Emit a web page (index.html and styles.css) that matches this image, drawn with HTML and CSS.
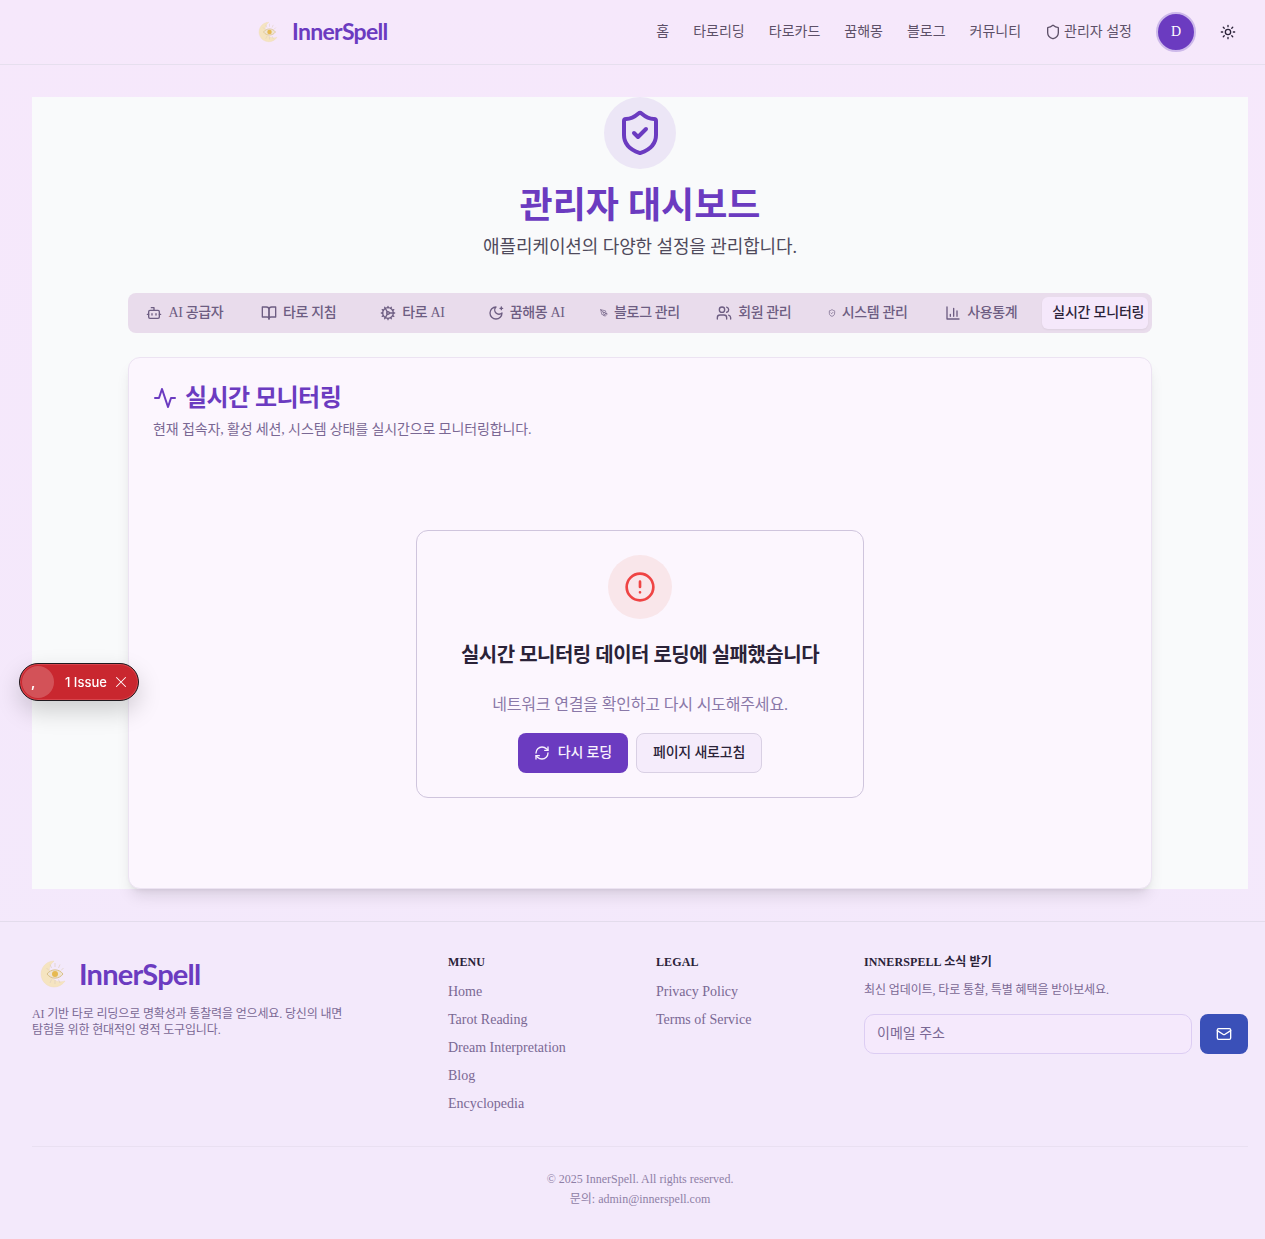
FILE: index.html
```html
<!DOCTYPE html>
<html lang="ko">
<head>
  <meta charset="UTF-8" />
  <meta name="viewport" content="width=device-width, initial-scale=1.0" />
  <link rel="stylesheet" href="styles.css">
  <title>InnerSpell 관리자 대시보드</title>
</head>
<body>
  <svg class="sprite" width="0" height="0" aria-hidden="true">
    <symbol id="i-shield" viewBox="0 0 24 24"><path d="M20 13c0 5-3.5 7.5-7.66 8.95a1 1 0 0 1-.67-.01C7.5 20.5 4 18 4 13V6a1 1 0 0 1 1-1c2 0 4.5-1.2 6.24-2.72a1.17 1.17 0 0 1 1.52 0C14.51 3.81 17 5 19 5a1 1 0 0 1 1 1z"/></symbol>
    <symbol id="i-shield-check" viewBox="0 0 24 24"><path d="M20 13c0 5-3.5 7.5-7.66 8.95a1 1 0 0 1-.67-.01C7.5 20.5 4 18 4 13V6a1 1 0 0 1 1-1c2 0 4.5-1.2 6.24-2.72a1.17 1.17 0 0 1 1.52 0C14.51 3.81 17 5 19 5a1 1 0 0 1 1 1z"/><path d="m9 12 2 2 4-4"/></symbol>
    <symbol id="i-sun" viewBox="0 0 24 24"><circle cx="12" cy="12" r="4"/><path d="M12 2v2M12 20v2M4.93 4.93l1.41 1.41M17.66 17.66l1.41 1.41M2 12h2M20 12h2M6.34 17.66l-1.41 1.41M19.07 4.93l-1.41 1.41"/></symbol>
    <symbol id="i-bot" viewBox="0 0 24 24"><path d="M12 8V4H8"/><rect x="4" y="8" width="16" height="12" rx="2"/><path d="M2 14h2M20 14h2M15 13v2M9 13v2"/></symbol>
    <symbol id="i-book" viewBox="0 0 24 24"><path d="M2 3h6a4 4 0 0 1 4 4v14a3 3 0 0 0-3-3H2z"/><path d="M22 3h-6a4 4 0 0 0-4 4v14a3 3 0 0 1 3-3h7z"/></symbol>
    <symbol id="i-cog" viewBox="0 0 24 24"><path d="M12 20a8 8 0 1 0 0-16 8 8 0 0 0 0 16Z"/><path d="M12 14a2 2 0 1 0 0-4 2 2 0 0 0 0 4Z"/><path d="M12 2v2M12 22v-2M17 20.66l-1-1.73M11 10.27 7 3.34M20.66 17l-1.73-1M3.34 7l1.73 1M14 12h8M2 12h2M20.66 7l-1.73 1M3.34 17l1.73-1M17 3.34l-1 1.73M11 13.73l-4 6.93"/></symbol>
    <symbol id="i-moon" viewBox="0 0 24 24"><path d="M12 3a6 6 0 0 0 9 9 9 9 0 1 1-9-9Z"/><path d="M20 3v4M22 5h-4"/></symbol>
    <symbol id="i-pen" viewBox="0 0 24 24"><path d="m12 19 7-7 3 3-7 7-3-3z"/><path d="m18 13-1.5-7.5L2 2l3.5 14.5L13 18l5-5z"/><path d="m2 2 7.59 7.59"/><circle cx="11" cy="11" r="2"/></symbol>
    <symbol id="i-users" viewBox="0 0 24 24"><path d="M16 21v-2a4 4 0 0 0-4-4H6a4 4 0 0 0-4 4v2"/><circle cx="9" cy="7" r="4"/><path d="M22 21v-2a4 4 0 0 0-3-3.87"/><path d="M16 3.13a4 4 0 0 1 0 7.75"/></symbol>
    <symbol id="i-chart" viewBox="0 0 24 24"><path d="M3 3v18h18"/><path d="M18 17V9M13 17V5M8 17v-3"/></symbol>
    <symbol id="i-activity" viewBox="0 0 24 24"><path d="M22 12h-4l-3 9L9 3l-3 9H2"/></symbol>
    <symbol id="i-alert" viewBox="0 0 24 24"><circle cx="12" cy="12" r="10"/><path d="M12 8v4M12 16h.01"/></symbol>
    <symbol id="i-refresh" viewBox="0 0 24 24"><path d="M3 12a9 9 0 0 1 9-9 9.75 9.75 0 0 1 6.74 2.74L21 8"/><path d="M21 3v5h-5"/><path d="M21 12a9 9 0 0 1-9 9 9.75 9.75 0 0 1-6.74-2.74L3 16"/><path d="M8 16H3v5"/></symbol>
    <symbol id="i-mail" viewBox="0 0 24 24"><rect x="2" y="4" width="20" height="16" rx="2"/><path d="m22 7-8.97 5.7a1.94 1.94 0 0 1-2.06 0L2 7"/></symbol>
    <symbol id="i-logo" viewBox="0 0 32 32">
      <path class="logo-moon" d="M17 3a13 13 0 1 0 11 20A11.500 11.500 0 0 1 17 3Z"/>
      <path class="logo-rays" d="M18 5v4M13 6.500l1.500 3.500M23 6.500 21.500 10M9.500 10l2.500 2.500M26.500 10 24 12.500M18 22v4M13 25l1.500-3.500M23 25l-1.500-3.500"/>
      <path class="logo-eye" d="M10 16c4-5.500 12-5.500 16 0-4 5.500-12 5.500-16 0Z"/>
      <circle class="logo-iris" cx="18" cy="16" r="3"/>
    </symbol>
  </svg>

  <header class="topbar">
    <a class="brand" href="#">
      <svg class="brand-mark"><use href="#i-logo"/></svg>
      <span class="brand-name">InnerSpell</span>
    </a>
    <nav class="topnav">
      <a href="#"><span class="label">홈</span></a>
      <a href="#"><span class="label">타로리딩</span></a>
      <a href="#"><span class="label">타로카드</span></a>
      <a href="#"><span class="label">꿈해몽</span></a>
      <a href="#"><span class="label">블로그</span></a>
      <a href="#"><span class="label">커뮤니티</span></a>
      <a class="topnav-admin" href="#"><svg class="icon icon-16"><use href="#i-shield"/></svg><span class="label">관리자 설정</span></a>
      <span class="avatar">D</span>
      <button class="theme-btn" type="button" aria-label="테마"><svg class="icon icon-16"><use href="#i-sun"/></svg></button>
    </nav>
  </header>

  <main class="page">
    <div class="panel">
      <div class="hero">
        <div class="hero-badge"><svg class="icon hero-icon"><use href="#i-shield-check"/></svg></div>
        <h1>관리자 대시보드</h1>
        <p>애플리케이션의 다양한 설정을 관리합니다.</p>
      </div>

      <div class="wrap">
        <div class="tabs">
          <a class="tab" href="#"><svg class="icon icon-16"><use href="#i-bot"/></svg><span class="label">AI 공급자</span></a>
          <a class="tab" href="#"><svg class="icon icon-16"><use href="#i-book"/></svg><span class="label">타로 지침</span></a>
          <a class="tab" href="#"><svg class="icon icon-16"><use href="#i-cog"/></svg><span class="label">타로 AI</span></a>
          <a class="tab" href="#"><svg class="icon icon-16"><use href="#i-moon"/></svg><span class="label">꿈해몽 AI</span></a>
          <a class="tab" href="#"><svg class="icon icon-8"><use href="#i-pen"/></svg><span class="label">블로그 관리</span></a>
          <a class="tab" href="#"><svg class="icon icon-16"><use href="#i-users"/></svg><span class="label">회원 관리</span></a>
          <a class="tab" href="#"><svg class="icon icon-8"><use href="#i-shield-check"/></svg><span class="label">시스템 관리</span></a>
          <a class="tab" href="#"><svg class="icon icon-16"><use href="#i-chart"/></svg><span class="label">사용통계</span></a>
          <a class="tab tab-active" href="#"><span class="label">실시간 모니터링</span></a>
        </div>

        <section class="card">
          <h2 class="card-title"><svg class="icon icon-24"><use href="#i-activity"/></svg>실시간 모니터링</h2>
          <p class="card-desc">현재 접속자, 활성 세션, 시스템 상태를 실시간으로 모니터링합니다.</p>

          <div class="error-box">
            <div class="error-badge"><svg class="icon error-icon"><use href="#i-alert"/></svg></div>
            <h3>실시간 모니터링 데이터 로딩에 실패했습니다</h3>
            <p>네트워크 연결을 확인하고 다시 시도해주세요.</p>
            <div class="error-actions">
              <button class="btn btn-primary" type="button"><svg class="icon icon-16"><use href="#i-refresh"/></svg><span class="label">다시 로딩</span></button>
              <button class="btn btn-ghost" type="button"><span class="label">페이지 새로고침</span></button>
            </div>
          </div>
        </section>
      </div>
    </div>
  </main>

  <footer class="footer">
    <div class="footer-grid">
      <div>
        <a class="brand brand-lg" href="#">
          <svg class="brand-mark"><use href="#i-logo"/></svg>
          <span class="brand-name">InnerSpell</span>
        </a>
        <p class="footer-about">AI 기반 타로 리딩으로 명확성과 통찰력을 얻으세요. 당신의 내면 탐험을 위한 현대적인 영적 도구입니다.</p>
      </div>
      <div>
        <h4>Menu</h4>
        <ul class="footer-links">
          <li><a href="#">Home</a></li>
          <li><a href="#">Tarot Reading</a></li>
          <li><a href="#">Dream Interpretation</a></li>
          <li><a href="#">Blog</a></li>
          <li><a href="#">Encyclopedia</a></li>
        </ul>
      </div>
      <div>
        <h4>Legal</h4>
        <ul class="footer-links">
          <li><a href="#">Privacy Policy</a></li>
          <li><a href="#">Terms of Service</a></li>
        </ul>
      </div>
      <div>
        <h4>InnerSpell 소식 받기</h4>
        <p class="footer-note">최신 업데이트, 타로 통찰, 특별 혜택을 받아보세요.</p>
        <form class="subscribe">
          <input type="email" placeholder="이메일 주소" />
          <button type="button" aria-label="구독"><svg class="icon icon-16"><use href="#i-mail"/></svg></button>
        </form>
      </div>
    </div>
    <div class="footer-bottom">
      <p>© 2025 InnerSpell. All rights reserved.</p>
      <p>문의: <a href="#">admin@innerspell.com</a></p>
    </div>
  </footer>

  <div class="issue-toast">
    <span class="issue-dot">,</span>
    <span class="issue-label">1 Issue</span>
    <svg class="icon issue-x" viewBox="0 0 24 24"><path d="M18 6 6 18M6 6l12 12"/></svg>
  </div>
</body>
</html>
```

FILE: styles.css
```css
* {
  box-sizing: border-box;
}
body {
  margin: 0;
  font-family: "Liberation Serif", "Noto Sans CJK KR", serif;
  color: #2a2238;
  background: linear-gradient(#f6e8fb, #f3e9fb);
  min-height: 1239px;
}
a {
  color: inherit;
  text-decoration: none;
}
h1, h2, h3, h4, p, ul {
  margin: 0;
  padding: 0;
}
.sprite {
  position: absolute;
}
.icon {
  fill: none;
  stroke: currentColor;
  stroke-width: 2;
  stroke-linecap: round;
  stroke-linejoin: round;
  flex: none;
}
.icon-8 { width: 8px; height: 8px; }
.icon-16 { width: 16px; height: 16px; }
.icon-24 { width: 24px; height: 24px; }
/* text next to an icon sits a little high in the row */
.label {
  display: block;
  padding-bottom: 4px;
}

/* logo */
.logo-moon { fill: #f5e4c0; stroke: #f0dcb6; stroke-width: 0.5; }
.logo-rays { fill: none; stroke: #dfd0bd; stroke-width: 0.7; }
.logo-eye { fill: #efe4d4; stroke: #d9c08a; stroke-width: 1; }
.logo-iris { fill: #e6b950; }

/* top bar */
.topbar {
  height: 65px;
  border-bottom: 1px solid #e6dfee;
  display: flex;
  align-items: center;
  justify-content: space-between;
  padding: 0 29px 0 256px;
}
.brand {
  display: flex;
  align-items: center;
  gap: 12px;
  color: #6b3bc0;
}
.brand-mark {
  width: 24px;
  height: 24px;
}
.brand-name {
  padding-bottom: 2px;
  font-family: "Lato", sans-serif;
  font-size: 23px;
  font-weight: 700;
  letter-spacing: -0.7px;
}
.topnav {
  display: flex;
  align-items: center;
  gap: 24px;
  font-size: 14px;
  color: #5d5068;
}
.topnav-admin {
  display: flex;
  align-items: center;
  gap: 3px;
}
.avatar {
  width: 40px;
  height: 40px;
  border-radius: 50%;
  background: #6b3bc0;
  border: 2px solid #cdb9ea;
  color: #fff;
  display: flex;
  align-items: center;
  justify-content: center;
  font-size: 14px;
}
.theme-btn {
  display: flex;
  padding: 0;
  border: 0;
  background: none;
  color: #2a2238;
}

/* main */
.page {
  padding: 32px 17px 32px 32px;
}
.panel {
  background: #f9fafb;
  height: 792px;
}
.hero {
  text-align: center;
}
.hero-badge {
  width: 72px;
  height: 72px;
  margin: 0 auto 15px;
  border-radius: 50%;
  background: #ece6f6;
  color: #6b3bc0;
  display: flex;
  align-items: center;
  justify-content: center;
}
.hero-icon {
  width: 48px;
  height: 48px;
}
.hero h1 {
  font-size: 36px;
  line-height: 44px;
  font-weight: 700;
  color: #6b3bc0;
}
.hero p {
  margin-top: 5px;
  font-size: 18px;
  line-height: 28px;
  letter-spacing: -0.1px;
  color: #4f4a5c;
}
.wrap {
  width: 1024px;
  margin: 32px auto 0;
}
.tabs {
  display: grid;
  grid-template-columns: repeat(9, 1fr);
  gap: 8px;
  height: 40px;
  padding: 4px;
  border-radius: 8px;
  background: #e9dcec;
}
.tab {
  display: flex;
  align-items: center;
  justify-content: center;
  gap: 6px;
  border-radius: 6px;
  font-size: 14px;
  font-weight: 500;
  letter-spacing: -0.35px;
  color: #6d5d82;
  white-space: nowrap;
}
.tab-active {
  justify-content: flex-start;
  padding-left: 10px;
  letter-spacing: -0.2px;
  background: #f5e8fb;
  color: #2a2238;
  box-shadow: 0 1px 2px rgba(0, 0, 0, 0.05);
}
.card {
  height: 532px;
  margin-top: 24px;
  padding: 24px;
  border: 1px solid #ece3f2;
  border-radius: 12px;
  background: #fcf6fe;
  box-shadow: 0 10px 15px -3px rgba(0, 0, 0, 0.1), 0 4px 6px -4px rgba(0, 0, 0, 0.1);
}
.card-title {
  display: flex;
  align-items: center;
  gap: 8px;
  font-size: 24px;
  line-height: 32px;
  font-weight: 700;
  letter-spacing: -0.55px;
  color: #6b3bc0;
}
.card-desc {
  margin-top: 6px;
  font-size: 14px;
  line-height: 20px;
  letter-spacing: -0.12px;
  color: #7a6894;
}
.error-box {
  width: 448px;
  height: 268px;
  margin: 90px auto 0;
  padding: 24px;
  border: 1px solid #cfc5dd;
  border-radius: 12px;
  text-align: center;
}
.error-badge {
  width: 64px;
  height: 64px;
  margin: 0 auto;
  border-radius: 50%;
  background: #f9e6ea;
  color: #ef4444;
  display: flex;
  align-items: center;
  justify-content: center;
}
.error-icon {
  width: 32px;
  height: 32px;
}
.error-box h3 {
  margin-top: 21px;
  font-size: 20px;
  line-height: 30px;
  font-weight: 700;
  letter-spacing: -0.5px;
  color: #2a2238;
}
.error-box p {
  margin-top: 23px;
  font-size: 16px;
  line-height: 24px;
  letter-spacing: -0.17px;
  color: #8a78a8;
}
.error-actions {
  display: flex;
  justify-content: center;
  gap: 8px;
  margin-top: 16px;
}
.btn {
  height: 40px;
  padding: 0 16px;
  border-radius: 8px;
  font: inherit;
  font-size: 14px;
  font-weight: 500;
  letter-spacing: -0.17px;
  display: flex;
  align-items: center;
  gap: 8px;
}
.btn-primary {
  border: 0;
  background: #6b3bc0;
  color: #f8f2fd;
}
.btn-ghost {
  border: 1px solid #d9d0e4;
  background: #f5ecfb;
  color: #2a2238;
}

/* footer */
.footer {
  border-top: 1px solid #e3dcec;
  background: #f3e9fb;
  padding: 32px 17px 28px 32px;
}
.footer-grid {
  display: grid;
  grid-template-columns: 384px 176px 176px 384px;
  gap: 32px;
  height: 192px;
}
.brand-lg .brand-mark {
  width: 32px;
  height: 32px;
}
.brand-lg {
  gap: 10px;
  margin: 2px 0 0 5px;
}
.brand-lg .brand-name {
  padding-bottom: 0;
  font-size: 29px;
  letter-spacing: -0.8px;
}
.footer-about {
  margin-top: 15px;
  max-width: 320px;
  font-size: 12px;
  line-height: 16px;
  letter-spacing: -0.15px;
  color: #7a6894;
}
.footer h4 {
  font-size: 12px;
  line-height: 16px;
  font-weight: 700;
  letter-spacing: 0.1px;
  text-transform: uppercase;
  color: #2a2238;
}
.footer-links {
  list-style: none;
  margin-top: 12px;
  font-size: 14px;
  line-height: 20px;
  color: #7a6894;
}
.footer-links li {
  margin-bottom: 8px;
}
.footer-note {
  margin-top: 12px;
  font-size: 12px;
  line-height: 16px;
  letter-spacing: -0.1px;
  color: #7a6894;
}
.subscribe {
  display: flex;
  gap: 8px;
  margin-top: 16px;
}
.subscribe input {
  flex: 1;
  min-width: 0;
  height: 40px;
  padding: 0 12px;
  border: 1px solid #dccdf3;
  border-radius: 10px;
  background: #f5e9fc;
  font: inherit;
  font-size: 14px;
}
.subscribe input::placeholder {
  color: #7a6894;
}
.subscribe button {
  width: 48px;
  height: 40px;
  border: 0;
  border-radius: 8px;
  background: #3a50b8;
  color: #fff;
  display: flex;
  align-items: center;
  justify-content: center;
}
.footer-bottom {
  border-top: 1px solid #e9e0f1;
  padding-top: 22px;
  text-align: center;
  font-size: 12px;
  line-height: 20px;
  color: #8f80a6;
}

/* issue toast stays over the page */
.issue-toast {
  position: fixed;
  left: 19px;
  top: 663px;
  width: 120px;
  height: 38px;
  display: flex;
  align-items: center;
  border: 1px solid #1f1a1f;
  border-radius: 19px;
  background: #c9272f;
  color: #fff;
  font-family: "Inter", sans-serif;
  font-size: 13px;
  font-weight: 500;
  box-shadow: inset 0 0 0 1px #d8444c, 0 10px 24px rgba(0, 0, 0, 0.18);
}
.issue-dot {
  width: 32px;
  height: 32px;
  margin-left: 2px;
  padding-left: 9px;
  border-radius: 50%;
  background: rgba(255, 255, 255, 0.2);
  display: flex;
  align-items: center;
  font-weight: 700;
}
.issue-label {
  margin-left: 11px;
}
.issue-x {
  width: 18px;
  height: 18px;
  margin-left: 5px;
  stroke-width: 1.4;
}
```
